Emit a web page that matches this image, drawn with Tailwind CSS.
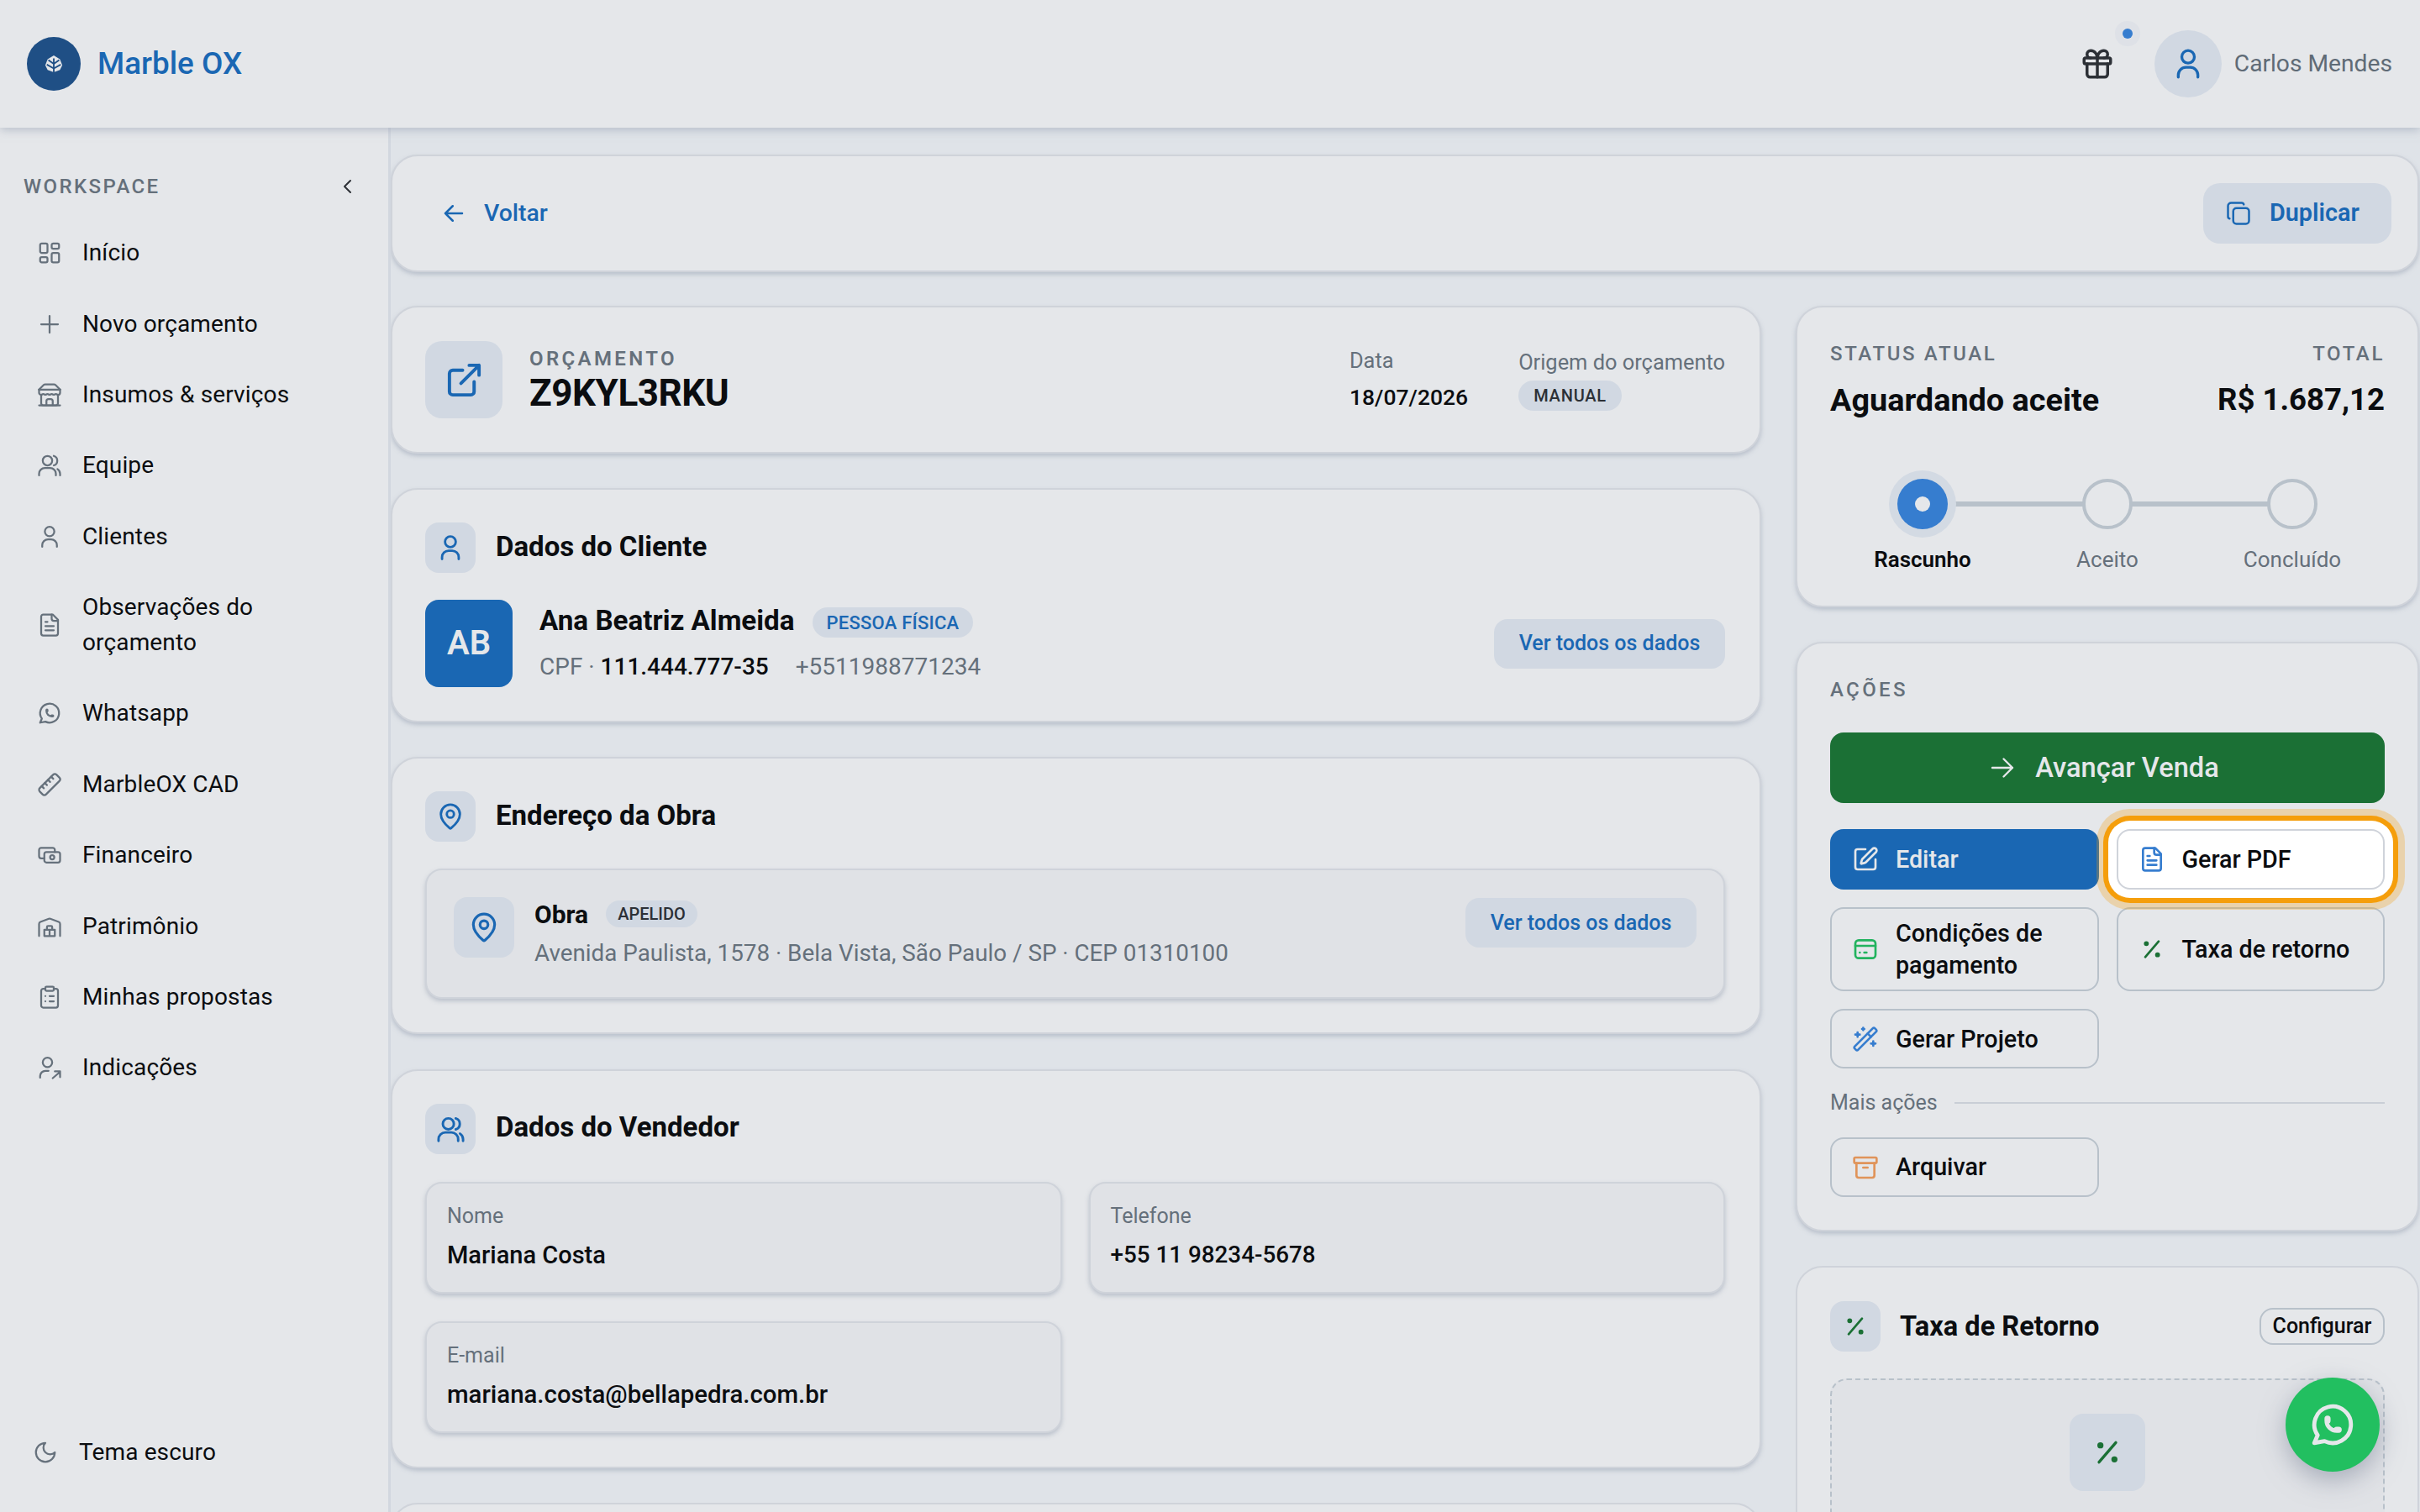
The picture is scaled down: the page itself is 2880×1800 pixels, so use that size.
<!DOCTYPE html>
<html lang="pt-BR">
<head>
    <meta charset="UTF-8">
    <title>Marble OX</title>
    <script src="https://cdn.jsdelivr.net/npm/@tailwindcss/browser@4"></script>
</head>
<body class="relative h-[1800px] overflow-hidden bg-[#dfe3e8] font-['Roboto',sans-serif] text-[#0b0d10]">
    <!-- Icones -->
    <svg class="hidden" xmlns="http://www.w3.org/2000/svg">
        <defs>
            <symbol id="i-dash" viewBox="0 0 24 24"><rect x="3" y="3" width="7" height="9" rx="1.5"/><rect x="14" y="3" width="7" height="5" rx="1.5"/><rect x="14" y="12" width="7" height="9" rx="1.5"/><rect x="3" y="16" width="7" height="5" rx="1.5"/></symbol>
            <symbol id="i-plus" viewBox="0 0 24 24"><path d="M4 12h16M12 4v16"/></symbol>
            <symbol id="i-store" viewBox="0 0 24 24"><path d="m2 7 4.41-4.41A2 2 0 0 1 7.83 2h8.34a2 2 0 0 1 1.42.59L22 7"/><path d="M4 12v8a2 2 0 0 0 2 2h12a2 2 0 0 0 2-2v-8"/><path d="M15 22v-4a2 2 0 0 0-2-2h-2a2 2 0 0 0-2 2v4"/><path d="M2 7h20"/><path d="M2 22h20"/><path d="M22 7v3a2 2 0 0 1-2 2 2.7 2.7 0 0 1-1.59-.63.7.7 0 0 0-.82 0A2.7 2.7 0 0 1 16 12a2.7 2.7 0 0 1-1.59-.63.7.7 0 0 0-.82 0A2.7 2.7 0 0 1 12 12a2.7 2.7 0 0 1-1.59-.63.7.7 0 0 0-.82 0A2.7 2.7 0 0 1 8 12a2.7 2.7 0 0 1-1.59-.63.7.7 0 0 0-.82 0A2.7 2.7 0 0 1 4 12a2 2 0 0 1-2-2V7"/></symbol>
            <symbol id="i-users" viewBox="0 0 24 24"><circle cx="10" cy="7.5" r="4.5"/><path d="M2 21.5v-1.5a5.5 5.5 0 0 1 5.500-5.500h5a5.500 5.500 0 0 1 5.500 5.500v1.500"/><path d="M16 3a4.700 4.700 0 0 1 0 9"/><path d="M22 21.500v-1.500a5.500 5.500 0 0 0-2.500-4.500"/></symbol>
            <symbol id="i-user" viewBox="0 0 24 24"><circle cx="12" cy="7" r="4.500"/><path d="M5 21.500v-1.500a5.500 5.500 0 0 1 5.500-5.500h3a5.500 5.500 0 0 1 5.500 5.500v1.500"/></symbol>
            <symbol id="i-doc" viewBox="0 0 24 24"><path d="M15 2H6a2 2 0 0 0-2 2v16a2 2 0 0 0 2 2h12a2 2 0 0 0 2-2V7Z"/><path d="M14 2v4a2 2 0 0 0 2 2h4"/><path d="M10 9H8M16 13H8M16 17H8"/></symbol>
            <symbol id="i-whats" viewBox="0 0 24 24"><path d="m3 21 1.650-3.800a9 9 0 1 1 3.400 2.900L3 21"/><path d="M9 10a.5.5 0 0 0 1 0V9a.5.5 0 0 0-1 0v1a5 5 0 0 0 5 5h1a.5.5 0 0 0 0-1h-1a.5.5 0 0 0 0 1"/></symbol>
            <symbol id="i-ruler" viewBox="0 0 24 24"><path d="M21.300 15.300a2.400 2.400 0 0 1 0 3.400l-2.600 2.600a2.400 2.400 0 0 1-3.400 0L2.700 8.700a2.410 2.410 0 0 1 0-3.400l2.600-2.600a2.410 2.410 0 0 1 3.400 0Z"/><path d="m14.500 12.500 2-2M11.500 9.500l2-2M8.500 6.500l2-2M17.500 15.500l2-2"/></symbol>
            <symbol id="i-cash" viewBox="0 0 24 24"><rect x="7" y="9" width="15" height="10" rx="2"/><circle cx="14.500" cy="14" r="2"/><path d="M17 9V7a2 2 0 0 0-2-2H4a2 2 0 0 0-2 2v6a2 2 0 0 0 2 2h3"/></symbol>
            <symbol id="i-bank" viewBox="0 0 24 24"><path d="M2 21V9.500a2 2 0 0 1 1.300-1.900l8-3a2 2 0 0 1 1.400 0l8 3A2 2 0 0 1 22 9.500V21"/><path d="M7 21v-6h10v6zM9.500 15v-2.500a1 1 0 0 1 1-1h3a1 1 0 0 1 1 1V15M12 15v6"/></symbol>
            <symbol id="i-clip" viewBox="0 0 24 24"><rect x="8" y="2" width="8" height="4" rx="1"/><path d="M16 4h2a2 2 0 0 1 2 2v14a2 2 0 0 1-2 2H6a2 2 0 0 1-2-2V6a2 2 0 0 1 2-2h2"/><path d="M12 11h4M12 16h4M8 11h.01M8 16h.01"/></symbol>
            <symbol id="i-refer" viewBox="0 0 24 24"><circle cx="10" cy="7" r="4.500"/><path d="M3 21.500V20a5 5 0 0 1 5-5h3"/><path d="m15 22 7-6M17 15.500h5V21"/></symbol>
            <symbol id="i-moon" viewBox="0 0 24 24"><path d="M12 3a6 6 0 0 0 9 9 9 9 0 1 1-9-9Z"/></symbol>
            <symbol id="i-gift" viewBox="0 0 24 24"><rect x="3" y="8" width="18" height="4" rx="1"/><path d="M12 8v13"/><path d="M19 12v7a2 2 0 0 1-2 2H7a2 2 0 0 1-2-2v-7"/><path d="M7.500 8a2.500 2.500 0 0 1 0-5C10.500 3 12 6 12 8c0-2 1.500-5 4.500-5a2.500 2.500 0 0 1 0 5"/></symbol>
            <symbol id="i-copy" viewBox="0 0 24 24"><rect x="7" y="7" width="15" height="15" rx="3"/><path d="M3.500 17A2 2 0 0 1 2 15V5a3 3 0 0 1 3-3h10a2 2 0 0 1 2 1.500"/></symbol>
            <symbol id="i-link" viewBox="0 0 24 24"><path d="M15 3h6v6M10 14 21 3"/><path d="M18 13v6a2 2 0 0 1-2 2H5a2 2 0 0 1-2-2V8a2 2 0 0 1 2-2h6"/></symbol>
            <symbol id="i-pin" viewBox="0 0 24 24"><path d="M20 10c0 5-5.500 10.200-7.400 11.800a1 1 0 0 1-1.200 0C9.500 20.200 4 15 4 10a8 8 0 0 1 16 0"/><circle cx="12" cy="10" r="3"/></symbol>
            <symbol id="i-right" viewBox="0 0 24 24"><path d="M4 12h16M13 5l7 7-7 7"/></symbol>
            <symbol id="i-left" viewBox="0 0 24 24"><path d="M20 12H4M11 5l-7 7 7 7"/></symbol>
            <symbol id="i-edit" viewBox="0 0 24 24"><path d="M12 3H5a2 2 0 0 0-2 2v14a2 2 0 0 0 2 2h14a2 2 0 0 0 2-2v-7"/><path d="M18.400 2.600a1 1 0 0 1 3 3l-9 9a2 2 0 0 1-.850.500l-2.900.850a.5.5 0 0 1-.600-.600l.850-2.900a2 2 0 0 1 .500-.850z"/></symbol>
            <symbol id="i-card" viewBox="0 0 24 24"><rect x="3" y="4" width="18" height="16" rx="3"/><path d="M3 9h18M7 15h.01M11 15h2"/></symbol>
            <symbol id="i-percent" viewBox="0 0 24 24"><path d="M18 5 6 19"/><circle cx="7" cy="7" r="1.200" fill="currentColor"/><circle cx="17" cy="17" r="1.200" fill="currentColor"/></symbol>
            <symbol id="i-wand" viewBox="0 0 24 24"><path d="m21.640 3.640-1.280-1.280a1.210 1.210 0 0 0-1.720 0L2.360 18.640a1.210 1.210 0 0 0 0 1.720l1.280 1.280a1.200 1.200 0 0 0 1.720 0L21.640 5.360a1.200 1.200 0 0 0 0-1.720"/><path d="m14 7 3 3M5 6v4M19 14v4M10 2v2M7 8H3M21 16h-4M11 3H9"/></symbol>
            <symbol id="i-archive" viewBox="0 0 24 24"><rect x="2" y="3" width="20" height="5" rx="1"/><path d="M4 8v11a2 2 0 0 0 2 2h12a2 2 0 0 0 2-2V8M10 12h4"/></symbol>
        </defs>
    </svg>

    <!-- Topo -->
    <header class="relative z-20 flex h-[152px] items-center justify-between bg-[#e5e7ea] pl-[32px] pr-[33px] shadow-[0_3px_10px_rgba(150,160,178,0.55)]">
        <div class="flex items-center gap-[20px]">
            <div class="flex h-[64px] w-[64px] items-center justify-center rounded-full bg-[#1f4f85]">
                <svg class="h-[22px] w-[22px]" viewBox="0 0 24 24"><path d="M12 1 20 6l3 8-3 6-8 3-8-3-3-6 3-8z" fill="#e5e7ea"/><path d="M12 5v18M12 12 5 7M12 12l7-5M12 18l-9-5M12 18l9-5" fill="none" stroke="#1f4f85" stroke-width="2"/></svg>
            </div>
            <span class="text-[36.8px] font-medium leading-[44px] text-[#1a67b3]">Marble OX</span>
        </div>
        <div class="flex items-center">
            <div class="relative mr-[47px] h-[42px] w-[42px] text-[#2c3036]">
                <svg class="h-[42px] w-[42px]" fill="none" stroke="currentColor" stroke-width="2" stroke-linecap="round" stroke-linejoin="round"><use href="#i-gift"/></svg>
                <span class="absolute left-[51px] top-[-21px] h-[12px] w-[12px] rounded-full bg-[#367dcf] shadow-[0_0_0_9px_rgba(210,215,225,0.35)]"></span>
            </div>
            <div class="flex h-[80px] w-[80px] items-center justify-center rounded-full bg-[#d1d8e2] text-[#1a67b3]">
                <svg class="h-[40px] w-[40px]" fill="none" stroke="currentColor" stroke-width="2" stroke-linecap="round" stroke-linejoin="round"><use href="#i-user"/></svg>
            </div>
            <span class="ml-[15px] text-[28.2px] leading-[40px] text-[#5f6b76]">Carlos Mendes</span>
        </div>
    </header>

    <div class="flex h-[1648px]">
        <!-- Menu lateral -->
        <aside class="flex w-[465px] shrink-0 flex-col border-r-[3px] border-[#d2d7df] bg-[#e5e7ea]">
            <div class="mt-[53px] flex h-[34px] items-center justify-between pl-[28px] pr-[36px]">
                <span class="text-[24px] font-medium tracking-[0.1em] text-[#65707b]">WORKSPACE</span>
                <svg class="h-[24px] w-[24px] text-[#2c3036]" fill="none" stroke="currentColor" stroke-width="2" stroke-linecap="round" stroke-linejoin="round" viewBox="0 0 24 24"><path d="m15 5-7 7 7 7"/></svg>
            </div>
            <nav class="mt-[20px] flex flex-col text-[28px] leading-[42px] tracking-[0.005em]">
                <a class="flex items-center gap-[24px] py-[21.2px] pl-[44px]"><svg class="h-[30px] w-[30px] shrink-0 text-[#66717c]" fill="none" stroke="currentColor" stroke-width="1.800" stroke-linecap="round" stroke-linejoin="round"><use href="#i-dash"/></svg>Início</a>
                <a class="flex items-center gap-[24px] py-[21.2px] pl-[44px]"><svg class="h-[30px] w-[30px] shrink-0 text-[#66717c]" fill="none" stroke="currentColor" stroke-width="1.800" stroke-linecap="round" stroke-linejoin="round"><use href="#i-plus"/></svg>Novo orçamento</a>
                <a class="flex items-center gap-[24px] py-[21.2px] pl-[44px]"><svg class="h-[30px] w-[30px] shrink-0 text-[#66717c]" fill="none" stroke="currentColor" stroke-width="1.800" stroke-linecap="round" stroke-linejoin="round"><use href="#i-store"/></svg>Insumos &amp; serviços</a>
                <a class="flex items-center gap-[24px] py-[21.2px] pl-[44px]"><svg class="h-[30px] w-[30px] shrink-0 text-[#66717c]" fill="none" stroke="currentColor" stroke-width="1.800" stroke-linecap="round" stroke-linejoin="round"><use href="#i-users"/></svg>Equipe</a>
                <a class="flex items-center gap-[24px] py-[21.2px] pl-[44px]"><svg class="h-[30px] w-[30px] shrink-0 text-[#66717c]" fill="none" stroke="currentColor" stroke-width="1.800" stroke-linecap="round" stroke-linejoin="round"><use href="#i-user"/></svg>Clientes</a>
                <a class="flex items-center gap-[24px] py-[21.2px] pl-[44px]"><svg class="h-[30px] w-[30px] shrink-0 text-[#66717c]" fill="none" stroke="currentColor" stroke-width="1.800" stroke-linecap="round" stroke-linejoin="round"><use href="#i-doc"/></svg><span class="w-[320px]">Observações do orçamento</span></a>
                <a class="flex items-center gap-[24px] py-[21.2px] pl-[44px]"><svg class="h-[30px] w-[30px] shrink-0 text-[#66717c]" fill="none" stroke="currentColor" stroke-width="1.800" stroke-linecap="round" stroke-linejoin="round"><use href="#i-whats"/></svg>Whatsapp</a>
                <a class="flex items-center gap-[24px] py-[21.2px] pl-[44px]"><svg class="h-[30px] w-[30px] shrink-0 -scale-x-100 text-[#66717c]" fill="none" stroke="currentColor" stroke-width="1.800" stroke-linecap="round" stroke-linejoin="round"><use href="#i-ruler"/></svg>MarbleOX CAD</a>
                <a class="flex items-center gap-[24px] py-[21.2px] pl-[44px]"><svg class="h-[30px] w-[30px] shrink-0 text-[#66717c]" fill="none" stroke="currentColor" stroke-width="1.800" stroke-linecap="round" stroke-linejoin="round"><use href="#i-cash"/></svg>Financeiro</a>
                <a class="flex items-center gap-[24px] py-[21.2px] pl-[44px]"><svg class="h-[30px] w-[30px] shrink-0 text-[#66717c]" fill="none" stroke="currentColor" stroke-width="1.800" stroke-linecap="round" stroke-linejoin="round"><use href="#i-bank"/></svg>Patrimônio</a>
                <a class="flex items-center gap-[24px] py-[21.2px] pl-[44px]"><svg class="h-[30px] w-[30px] shrink-0 text-[#66717c]" fill="none" stroke="currentColor" stroke-width="1.800" stroke-linecap="round" stroke-linejoin="round"><use href="#i-clip"/></svg>Minhas propostas</a>
                <a class="flex items-center gap-[24px] py-[21.2px] pl-[44px]"><svg class="h-[30px] w-[30px] shrink-0 text-[#66717c]" fill="none" stroke="currentColor" stroke-width="1.800" stroke-linecap="round" stroke-linejoin="round"><use href="#i-refer"/></svg>Indicações</a>
            </nav>
            <a class="mt-auto mb-[29px] flex items-center gap-[25px] py-[21px] pl-[39px] text-[28px] leading-[42px] tracking-[0.005em]"><svg class="h-[30px] w-[30px] shrink-0 text-[#66717c]" fill="none" stroke="currentColor" stroke-width="1.800" stroke-linecap="round" stroke-linejoin="round"><use href="#i-moon"/></svg>Tema escuro</a>
        </aside>

        <!-- Conteudo -->
        <main class="flex min-w-0 flex-1 flex-col gap-[40px] overflow-hidden pr-[1px] pt-[32px]">
            <section class="flex h-[140px] shrink-0 items-center justify-between rounded-[32px] border-2 border-[#cfd3da] bg-[#e5e7ea] pl-[58px] pr-[31px] shadow-[0_3px_5px_rgba(150,160,178,0.5)]">
                <a class="flex items-center gap-[21px] pt-[1px] text-[28.4px] font-medium text-[#1a67b3]"><svg class="h-[30px] w-[30px]" fill="none" stroke="currentColor" stroke-width="2" stroke-linecap="round" stroke-linejoin="round"><use href="#i-left"/></svg>Voltar</a>
                <button class="flex h-[72px] w-[224px] items-center gap-[22px] rounded-[20px] bg-[#d1d8e2] pl-[27px] text-[28.8px] font-semibold text-[#1a67b3]"><svg class="h-[30px] w-[30px]" fill="none" stroke="currentColor" stroke-width="2" stroke-linecap="round" stroke-linejoin="round"><use href="#i-copy"/></svg>Duplicar</button>
            </section>

            <div class="flex gap-[41px]">
                <!-- Coluna esquerda -->
                <div class="flex w-[1631px] shrink-0 flex-col gap-[41px]">
                    <section class="flex h-[176px] shrink-0 items-center rounded-[32px] border-2 border-[#cfd3da] bg-[#e5e7ea] pl-[39px] pr-[41px] shadow-[0_3px_5px_rgba(150,160,178,0.5)]">
                        <div class="flex h-[92px] w-[92px] items-center justify-center rounded-[20px] bg-[#d1d8e2] text-[#1a67b3]"><svg class="h-[47px] w-[47px]" fill="none" stroke="currentColor" stroke-width="2" stroke-linecap="round" stroke-linejoin="round"><use href="#i-link"/></svg></div>
                        <div class="ml-[32px]">
                            <div class="text-[24px] font-semibold leading-[32px] tracking-[0.14em] text-[#65707b]">ORÇAMENTO</div>
                            <div class="text-[44px] font-bold leading-[50px] tracking-[-0.01em]">Z9KYL3RKU</div>
                        </div>
                        <div class="ml-auto mr-[60px]">
                            <div class="text-[25.4px] leading-[36px] text-[#65707b]">Data</div>
                            <div class="mt-[6px] text-[26.5px] font-medium leading-[40px]">18/07/2026</div>
                        </div>
                        <div class="-mt-[2px]">
                            <div class="text-[25.4px] leading-[36px] text-[#65707b]">Origem do orçamento</div>
                            <span class="mt-[4px] inline-flex h-[36px] items-center rounded-full bg-[#d1d8e2] px-[18px] text-[20px] font-medium tracking-[0.04em] text-[#2c3036]">MANUAL</span>
                        </div>
                    </section>

                    <section class="h-[279px] shrink-0 rounded-[32px] border-2 border-[#cfd3da] bg-[#e5e7ea] pl-[39px] pr-[41px] pt-[39px] shadow-[0_3px_5px_rgba(150,160,178,0.5)]">
                        <div class="flex items-center gap-[24px]">
                            <div class="flex h-[60px] w-[60px] items-center justify-center rounded-[16px] bg-[#d1d8e2] text-[#1a67b3]"><svg class="h-[34px] w-[34px]" fill="none" stroke="currentColor" stroke-width="2" stroke-linecap="round" stroke-linejoin="round"><use href="#i-user"/></svg></div>
                            <h2 class="mb-[2px] text-[33px] font-bold leading-[42px]">Dados do Cliente</h2>
                        </div>
                        <div class="mt-[32px] flex items-center">
                            <div class="flex h-[104px] w-[104px] items-center justify-center rounded-[16px] bg-[#1a67b3] text-[40px] font-semibold text-[#e5e7ea]">AB</div>
                            <div class="ml-[32px] flex flex-col gap-[15px] pt-[1px]">
                                <div class="flex h-[40px] items-center gap-[21px]">
                                    <span class="text-[33.2px] font-bold">Ana Beatriz Almeida</span>
                                    <span class="mt-[4px] flex h-[36px] items-center rounded-full bg-[#d1d8e2] px-[17px] text-[22px] font-medium tracking-[0.01em] text-[#1a67b3]">PESSOA FÍSICA</span>
                                </div>
                                <div class="flex h-[40px] items-center text-[28px] text-[#65707b]">
                                    <span>CPF ·&nbsp;</span><span class="font-medium text-[#0b0d10]">111.444.777-35</span><span class="ml-[32px]">+5511988771234</span>
                                </div>
                            </div>
                            <button class="ml-auto h-[59px] w-[275px] rounded-[16px] bg-[#d1d8e2] text-[25px] font-medium text-[#1a67b3]">Ver todos os dados</button>
                        </div>
                    </section>

                    <section class="h-[330px] shrink-0 rounded-[32px] border-2 border-[#cfd3da] bg-[#e5e7ea] pl-[39px] pr-[41px] pt-[39px] shadow-[0_3px_5px_rgba(150,160,178,0.5)]">
                        <div class="flex items-center gap-[24px]">
                            <div class="flex h-[60px] w-[60px] items-center justify-center rounded-[16px] bg-[#d1d8e2] text-[#1a67b3]"><svg class="h-[34px] w-[34px]" fill="none" stroke="currentColor" stroke-width="2" stroke-linecap="round" stroke-linejoin="round"><use href="#i-pin"/></svg></div>
                            <h2 class="mb-[2px] text-[33px] font-bold leading-[42px]">Endereço da Obra</h2>
                        </div>
                        <div class="mt-[32px] flex h-[155px] items-start rounded-[20px] border-2 border-[#cfd3da] bg-[#e0e2e6] pl-[32px] pr-[32px] pt-[32px] shadow-[0_3px_5px_rgba(150,160,178,0.5)]">
                            <div class="flex h-[72px] w-[72px] shrink-0 items-center justify-center rounded-[16px] bg-[#d1d8e2] text-[#1a67b3]"><svg class="h-[38px] w-[38px]" fill="none" stroke="currentColor" stroke-width="2" stroke-linecap="round" stroke-linejoin="round"><use href="#i-pin"/></svg></div>
                            <div class="ml-[24px]">
                                <div class="flex h-[40px] items-center gap-[21px]">
                                    <span class="text-[30px] font-bold">Obra</span>
                                    <span class="flex h-[32px] items-center rounded-full bg-[#d1d8e2] px-[14px] text-[20px] font-medium text-[#2c3036]">APELIDO</span>
                                </div>
                                <div class="mt-[7px] text-[27.8px] leading-[40px] text-[#65707b]">Avenida Paulista, 1578 · Bela Vista, São Paulo / SP · CEP 01310100</div>
                            </div>
                            <button class="ml-auto mt-[1px] h-[59px] w-[275px] rounded-[16px] bg-[#d1d8e2] text-[25px] font-medium text-[#1a67b3]">Ver todos os dados</button>
                        </div>
                    </section>

                    <section class="mt-[1px] h-[475px] shrink-0 rounded-[32px] border-2 border-[#cfd3da] bg-[#e5e7ea] pl-[39px] pr-[41px] pt-[39px] shadow-[0_3px_5px_rgba(150,160,178,0.5)]">
                        <div class="flex items-center gap-[24px]">
                            <div class="flex h-[60px] w-[60px] items-center justify-center rounded-[16px] bg-[#d1d8e2] text-[#1a67b3]"><svg class="h-[35px] w-[35px]" fill="none" stroke="currentColor" stroke-width="2" stroke-linecap="round" stroke-linejoin="round"><use href="#i-users"/></svg></div>
                            <h2 class="mb-[4px] text-[33px] font-bold leading-[42px]">Dados do Vendedor</h2>
                        </div>
                        <div class="mt-[33px] grid grid-cols-2 gap-x-[32px] gap-y-[33px]">
                            <div class="h-[133px] rounded-[20px] border-2 border-[#cfd3da] bg-[#e0e2e6] px-[24px] pt-[21px] shadow-[0_3px_5px_rgba(150,160,178,0.5)]">
                                <div class="text-[25px] leading-[36px] text-[#65707b]">Nome</div>
                                <div class="mt-[8px] text-[29px] font-medium leading-[40px]">Mariana Costa</div>
                            </div>
                            <div class="h-[133px] rounded-[20px] border-2 border-[#cfd3da] bg-[#e0e2e6] px-[24px] pt-[21px] shadow-[0_3px_5px_rgba(150,160,178,0.5)]">
                                <div class="text-[25px] leading-[36px] text-[#65707b]">Telefone</div>
                                <div class="mt-[8px] text-[27.8px] font-medium leading-[40px]">+55 11 98234-5678</div>
                            </div>
                            <div class="h-[133px] rounded-[20px] border-2 border-[#cfd3da] bg-[#e0e2e6] px-[24px] pt-[21px] shadow-[0_3px_5px_rgba(150,160,178,0.5)]">
                                <div class="text-[25px] leading-[36px] text-[#65707b]">E-mail</div>
                                <div class="mt-[8px] text-[29.4px] font-medium leading-[40px]">mariana.costa@bellapedra.com.br</div>
                            </div>
                        </div>
                    </section>

                    <section class="h-[200px] shrink-0 rounded-[32px] border-2 border-[#cfd3da] bg-[#e5e7ea]"></section>
                </div>

                <!-- Coluna direita -->
                <div class="flex min-w-0 flex-1 flex-col gap-[41px]">
                    <section class="h-[359px] shrink-0 rounded-[32px] border-2 border-[#cfd3da] bg-[#e5e7ea] px-[39px] pt-[39px] shadow-[0_3px_5px_rgba(150,160,178,0.5)]">
                        <div class="flex justify-between text-[24px] font-medium leading-[32px] tracking-[0.11em] text-[#65707b]"><span>STATUS ATUAL</span><span>TOTAL</span></div>
                        <div class="mt-[15px] flex items-center justify-between font-bold leading-[48px]"><span class="text-[37.8px]">Aguardando aceite</span><span class="text-[36.6px]">R$ 1.687,12</span></div>
                        <div class="relative mt-[70px] grid grid-cols-3">
                            <div class="absolute left-[110px] right-[110px] top-[27px] h-[6px] bg-[#b8c1ca]"></div>
                            <div class="relative flex flex-col items-center">
                                <div class="flex h-[60px] w-[60px] items-center justify-center rounded-full bg-[#367dcf] shadow-[0_0_0_10px_#d3dae3]"><span class="h-[18px] w-[18px] rounded-full bg-[#e5e7ea]"></span></div>
                                <span class="mt-[18px] text-[26px] font-semibold leading-[36px]">Rascunho</span>
                            </div>
                            <div class="relative flex flex-col items-center">
                                <div class="h-[60px] w-[60px] rounded-full border-[4px] border-[#b8c1ca] bg-[#e5e7ea]"></div>
                                <span class="mt-[18px] text-[26px] leading-[36px] text-[#65707b]">Aceito</span>
                            </div>
                            <div class="relative flex flex-col items-center">
                                <div class="h-[60px] w-[60px] rounded-full border-[4px] border-[#b8c1ca] bg-[#e5e7ea]"></div>
                                <span class="mt-[18px] text-[26px] leading-[36px] text-[#65707b]">Concluído</span>
                            </div>
                        </div>
                    </section>

                    <section class="h-[702px] shrink-0 rounded-[32px] border-2 border-[#cfd3da] bg-[#e5e7ea] px-[39px] pt-[39px] shadow-[0_3px_5px_rgba(150,160,178,0.5)]">
                        <div class="text-[24px] font-medium leading-[32px] tracking-[0.14em] text-[#65707b]">AÇÕES</div>
                        <button class="mt-[35px] flex h-[84px] w-full items-center justify-center gap-[21px] rounded-[16px] bg-[#1b7035] pr-[10px] text-[32.6px] font-medium text-[#e5e7ea]"><svg class="h-[36px] w-[36px]" fill="none" stroke="currentColor" stroke-width="1.600" stroke-linecap="round" stroke-linejoin="round"><use href="#i-right"/></svg>Avançar Venda</button>
                        <div class="mt-[31px] grid grid-cols-2 gap-x-[21px] gap-y-[21px] text-[28.7px] font-medium leading-[38px]">
                            <button class="flex h-[72px] items-center gap-[20px] rounded-[16px] bg-[#1a67b3] pl-[26px] text-left text-[#e5e7ea]"><svg class="h-[32px] w-[32px] shrink-0" fill="none" stroke="currentColor" stroke-width="2" stroke-linecap="round" stroke-linejoin="round"><use href="#i-edit"/></svg>Editar</button>
                            <button class="relative z-10 flex h-[72px] items-center gap-[20px] rounded-[16px] border-2 border-[#cfd3da] bg-white pl-[24px] text-left shadow-[0_0_0_10px_#fff,0_0_0_16px_#f59e0b,0_0_0_24px_rgba(245,158,11,0.28)]"><svg class="h-[32px] w-[32px] shrink-0 text-[#367dcf]" fill="none" stroke="currentColor" stroke-width="2" stroke-linecap="round" stroke-linejoin="round"><use href="#i-doc"/></svg>Gerar PDF</button>
                            <button class="flex h-[100px] items-center gap-[20px] rounded-[16px] border-2 border-[#b8c1ca] pl-[24px] text-left"><svg class="h-[32px] w-[32px] shrink-0 text-[#22b35e]" fill="none" stroke="currentColor" stroke-width="2" stroke-linecap="round" stroke-linejoin="round"><use href="#i-card"/></svg><span>Condições de pagamento</span></button>
                            <button class="flex h-[100px] items-center gap-[20px] rounded-[16px] border-2 border-[#b8c1ca] pl-[24px] text-left"><svg class="h-[32px] w-[32px] shrink-0 text-[#1b7035]" fill="none" stroke="currentColor" stroke-width="2" stroke-linecap="round" stroke-linejoin="round"><use href="#i-percent"/></svg>Taxa de retorno</button>
                            <button class="flex h-[71px] items-center gap-[20px] rounded-[16px] border-2 border-[#b8c1ca] pl-[24px] text-left"><svg class="h-[32px] w-[32px] shrink-0 text-[#367dcf]" fill="none" stroke="currentColor" stroke-width="2" stroke-linecap="round" stroke-linejoin="round"><use href="#i-wand"/></svg>Gerar Projeto</button>
                        </div>
                        <div class="mt-[23px] flex h-[36px] items-center gap-[20px] text-[25px] text-[#65707b]"><span>Mais ações</span><span class="h-[2px] flex-1 bg-[#c9ced6]"></span></div>
                        <div class="mt-[23px] grid grid-cols-2 gap-x-[21px] text-[28.7px] font-medium">
                            <button class="flex h-[71px] items-center gap-[20px] rounded-[16px] border-2 border-[#b8c1ca] pl-[24px] text-left"><svg class="h-[32px] w-[32px] shrink-0 text-[#e0945a]" fill="none" stroke="currentColor" stroke-width="2" stroke-linecap="round" stroke-linejoin="round"><use href="#i-archive"/></svg>Arquivar</button>
                        </div>
                    </section>

                    <section class="h-[400px] shrink-0 rounded-[32px] border-2 border-[#cfd3da] bg-[#e5e7ea] px-[39px] pt-[40px]">
                        <div class="flex h-[60px] items-center">
                            <div class="flex h-[60px] w-[60px] items-center justify-center rounded-[16px] bg-[#d1d8e2] text-[#1b7035]"><svg class="h-[32px] w-[32px]" fill="none" stroke="currentColor" stroke-width="2" stroke-linecap="round" stroke-linejoin="round"><use href="#i-percent"/></svg></div>
                            <h2 class="ml-[23px] text-[32.6px] font-bold leading-[42px]">Taxa de Retorno</h2>
                            <button class="ml-auto h-[44px] w-[149px] rounded-[16px] border-2 border-[#b8c1ca] text-[25px] font-medium">Configurar</button>
                        </div>
                        <div class="mt-[32px] flex h-[300px] justify-center rounded-[20px] border-2 border-dashed border-[#b8c1ca] bg-[#e0e2e6] pt-[40px]">
                            <div class="flex h-[92px] w-[90px] items-center justify-center rounded-[16px] bg-[#d1d8e2] text-[#1b7035]"><svg class="h-[40px] w-[40px]" fill="none" stroke="currentColor" stroke-width="2" stroke-linecap="round" stroke-linejoin="round"><use href="#i-percent"/></svg></div>
                        </div>
                    </section>
                </div>
            </div>
        </main>
    </div>

    <button class="absolute bottom-[48px] right-[48px] z-30 flex h-[112px] w-[112px] items-center justify-center rounded-full bg-[#22bf60] text-[#e5e7ea] shadow-[0_10px_30px_rgba(120,130,150,0.55)]">
        <svg class="h-[58px] w-[58px]" fill="none" stroke="currentColor" stroke-width="2" stroke-linecap="round" stroke-linejoin="round"><use href="#i-whats"/></svg>
    </button>
</body>
</html>
